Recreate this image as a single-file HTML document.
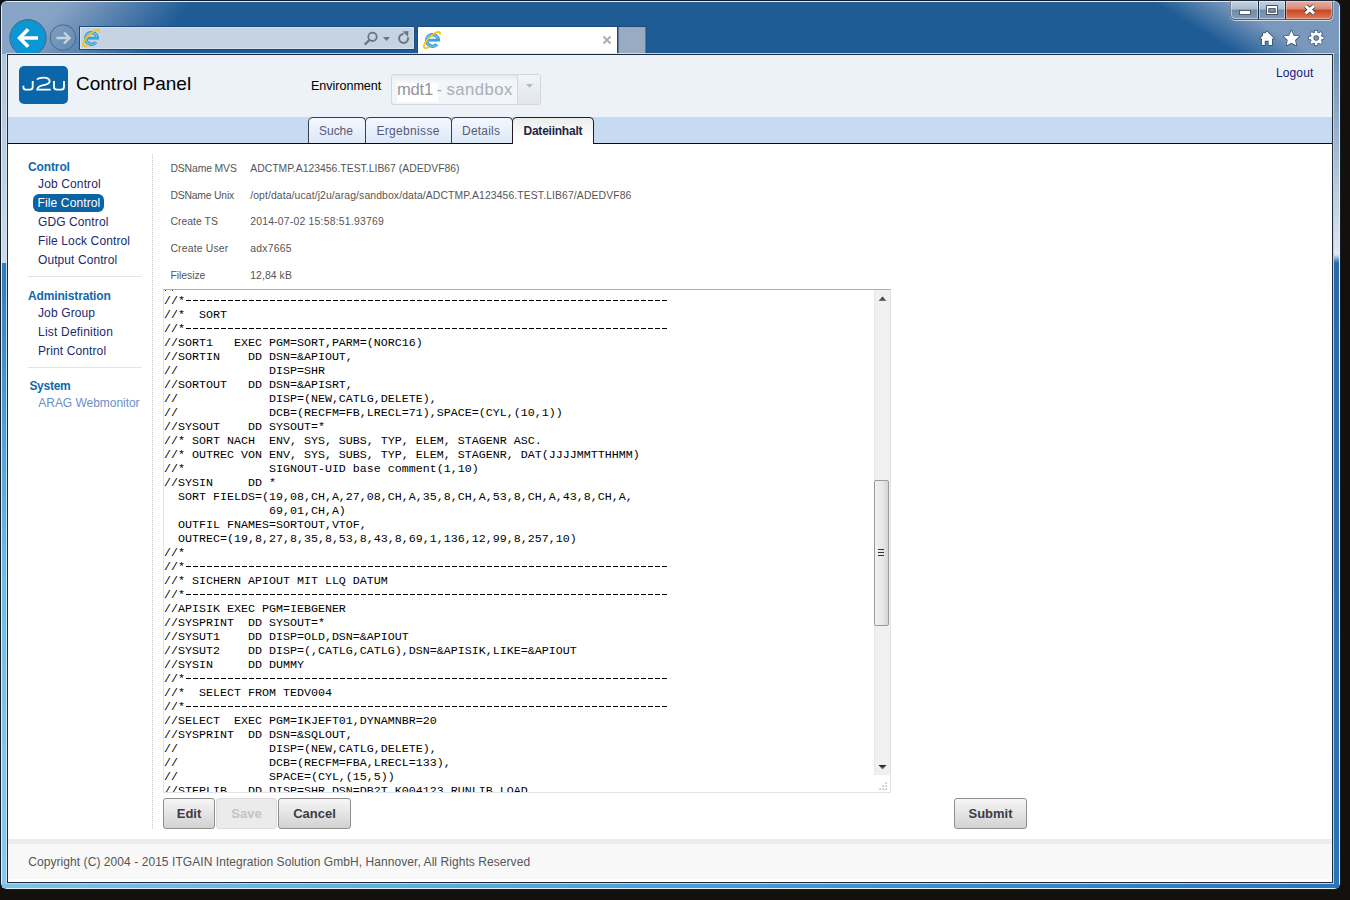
<!DOCTYPE html>
<html><head><meta charset="utf-8">
<style>
html,body{margin:0;padding:0}
body{width:1350px;height:900px;background:#12110e;position:relative;overflow:hidden;font-family:"Liberation Sans",sans-serif}
.abs{position:absolute}
#chrome{position:absolute;left:0;top:0}
#content{position:absolute;left:7px;top:54px;width:1326px;height:829px;box-sizing:border-box;border:1px solid #1c2a3a;background:#fff;overflow:hidden}
#content .abs{white-space:pre}
</style></head><body>
<svg id="chrome" width="1350" height="900" viewBox="0 0 1350 900">
  <defs>
    <linearGradient id="tl" gradientUnits="userSpaceOnUse" x1="60" y1="-10" x2="140" y2="62">
      <stop offset="0" stop-color="#88a4c6"/><stop offset="0.15" stop-color="#84a0c3"/><stop offset="0.52" stop-color="#5882af"/><stop offset="1" stop-color="#1f5c96"/>
    </linearGradient>
    <linearGradient id="tr" gradientUnits="userSpaceOnUse" x1="1150" y1="0" x2="1170" y2="-33">
      <stop offset="0" stop-color="#7a98bc" stop-opacity="0"/><stop offset="1" stop-color="#7a98bc"/>
    </linearGradient>
    <linearGradient id="lb" gradientUnits="userSpaceOnUse" x1="0" y1="54" x2="0" y2="889">
      <stop offset="0" stop-color="#b0c4da"/><stop offset="0.25" stop-color="#c8dbec"/>
      <stop offset="0.25" stop-color="#2d7cc0"/><stop offset="0.45" stop-color="#4aa2d8"/>
      <stop offset="0.62" stop-color="#6cbce4"/><stop offset="0.85" stop-color="#82c6ea"/><stop offset="1" stop-color="#86c8ea"/>
    </linearGradient>
    <linearGradient id="rb" gradientUnits="userSpaceOnUse" x1="0" y1="54" x2="0" y2="889">
      <stop offset="0" stop-color="#6f8fb2"/><stop offset="0.24" stop-color="#dfe8f0"/>
      <stop offset="0.25" stop-color="#2a6aaa"/><stop offset="1" stop-color="#2a74b8"/>
    </linearGradient>
    <linearGradient id="bb" gradientUnits="userSpaceOnUse" x1="0" y1="0" x2="1340" y2="0">
      <stop offset="0" stop-color="#7cc4e8"/><stop offset="0.5" stop-color="#4aa0d8"/><stop offset="1" stop-color="#2a74b8"/>
    </linearGradient>
    <linearGradient id="wbtn" x1="0" y1="0" x2="0" y2="1">
      <stop offset="0" stop-color="#c4d2e0"/><stop offset="0.45" stop-color="#a9bccf"/><stop offset="0.5" stop-color="#6d8cab"/><stop offset="1" stop-color="#7f9cba"/>
    </linearGradient>
    <linearGradient id="cbtn" x1="0" y1="0" x2="0" y2="1">
      <stop offset="0" stop-color="#e8b0a4"/><stop offset="0.45" stop-color="#d88a78"/><stop offset="0.5" stop-color="#c6451f"/><stop offset="1" stop-color="#dc7c5c"/>
    </linearGradient>
  </defs>
  <rect x="0" y="0" width="1341" height="890" rx="7" fill="#141d26"/>
  <rect x="1" y="1" width="1339" height="888" rx="6" fill="#e4ecf4"/>
  <rect x="2" y="2" width="1337" height="886" rx="5" fill="#1f5c96"/>
  <rect x="2" y="54" width="5" height="833" fill="url(#lb)"/>
  <rect x="1334" y="54" width="5" height="834" fill="url(#rb)"/>
  <rect x="2" y="884" width="1337" height="4" fill="url(#bb)"/>
  <path d="M2 7 Q2 2 7 2 L700 2 L700 54 L2 54 Z" fill="url(#tl)"/>
  <path d="M700 2 L1334 2 Q1339 2 1339 7 L1339 54 L700 54 Z" fill="url(#tr)"/>

  <path d="M1230.5 0.5 V15.5 Q1230.5 20.5 1235.5 20.5 H1328 Q1333 20.5 1333 15.5 V0.5" fill="none" stroke="#e6edf4" stroke-opacity="0.8" stroke-width="1"/>
  <path d="M1230.5 0 V15 Q1230.5 19.5 1235 19.5 H1328 Q1332.5 19.5 1332.5 15 V0 Z" fill="#1e2a38"/>
  <path d="M1231 1 H1258 V19 H1235 Q1231 19 1231 15 Z" fill="url(#wbtn)"/>
  <rect x="1259" y="1" width="26" height="18" fill="url(#wbtn)"/>
  <path d="M1286 1 H1332 V15 Q1332 19 1328 19 H1286 Z" fill="url(#cbtn)"/>
  <path d="M1231.5 1.5 H1257.5 V18.5 H1235 Q1231.5 18.5 1231.5 15 Z" fill="none" stroke="#ffffff" stroke-opacity="0.45" stroke-width="1"/>
  <rect x="1259.5" y="1.5" width="25" height="17" fill="none" stroke="#ffffff" stroke-opacity="0.45" stroke-width="1"/>
  <path d="M1286.5 1.5 H1331.5 V15 Q1331.5 18.5 1328 18.5 H1286.5 Z" fill="none" stroke="#ffffff" stroke-opacity="0.35" stroke-width="1"/>
  <rect x="1239.5" y="10.5" width="11" height="4" fill="#fff" stroke="#3a4450" stroke-width="0.8"/>
  <path fill-rule="evenodd" fill="#fff" stroke="#3a4450" stroke-width="0.9" d="M1266.5 5.5 H1277.5 V14.5 H1266.5 Z M1268.7 8.6 V12.3 H1275.3 V8.6 Z"/>
  <path d="M1305.6 6 L1313.9 13.4 M1313.9 6 L1305.6 13.4" stroke="#3a4450" stroke-width="4.6"/>
  <path d="M1305.6 6 L1313.9 13.4 M1313.9 6 L1305.6 13.4" stroke="#fff" stroke-width="3.0"/>

  <circle cx="28" cy="37.8" r="18.2" fill="#0a97d4" stroke="#46607a" stroke-width="0.9"/>
  <path d="M19.5 38 H38 M28.2 29.2 L19.6 38 L28.2 46.8" fill="none" stroke="#fff" stroke-width="3.6" stroke-linejoin="miter" stroke-linecap="butt"/>
  <circle cx="63" cy="37.6" r="12.8" fill="rgba(120,150,185,0.25)" stroke="#46698e" stroke-width="1"/>
  <path d="M56.5 38 H69.5 M64 32.5 L69.5 38 L64 43.5" fill="none" stroke="#c7d2de" stroke-width="2.4"/>

  <rect x="79.5" y="26.5" width="335" height="23" fill="#c5d3e2" stroke="#1b4a7a" stroke-width="1"/>
  <rect x="80.5" y="27.5" width="333" height="21" fill="none" stroke="#dae3ed" stroke-width="1"/>
  <circle cx="372.5" cy="36.8" r="4.2" fill="none" stroke="#6b757f" stroke-width="1.8"/>
  <path d="M369.6 39.8 L364.8 44.6" stroke="#6b757f" stroke-width="2.2"/>
  <path d="M383 37 H390 L386.5 41 Z" fill="#6b757f"/>
  <path d="M403.6 34.0 A4.5 4.5 0 1 0 407.9 37.2" fill="none" stroke="#6b757f" stroke-width="1.9"/>
  <path d="M402.6 31.6 L408.4 31.0 L408.0 36.8 Z" fill="#6b757f"/>

<g transform="translate(83,30)">
  <path d="M14.4 8.2 A5.9 5.9 0 1 0 13.0 12.3" fill="none" stroke="#2f96d6" stroke-width="3.3"/>
  <path d="M14.4 8.2 A5.9 5.9 0 1 0 13.0 12.3" fill="none" stroke="#70ccf2" stroke-width="1.3"/>
  <path d="M3.4 8.2 H15.9" stroke="#3aa2de" stroke-width="2.8"/>
  <path d="M16.03 1.87 L16.04 1.34 L15.95 0.89 L15.77 0.52 L15.49 0.24 L15.13 0.05 L14.68 -0.04 L14.15 -0.04 L13.55 0.06 L12.88 0.25 L12.15 0.54 L11.38 0.91 L10.56 1.37 L9.72 1.91 L8.85 2.52 L7.97 3.19 L7.10 3.92 L6.23 4.70 L5.39 5.52 L4.57 6.37 L3.80 7.24 L3.08 8.11 L2.41 8.99 L1.82 9.85 L1.29 10.70 L0.85 11.51 L0.49 12.27 L0.22 12.99 L0.04 13.65 L-0.04 14.24 L-0.03 14.76 L0.08 15.19 L0.28 15.54 L0.57 15.80 L0.96 15.97 L1.42 16.05 L1.97 16.02 L2.58 15.91 L3.26 15.70 L4.00 15.39 L4.78 15.00" fill="none" stroke="#f2b600" stroke-width="1.7" stroke-linecap="round"/>
  <path d="M16.03 1.87 L16.04 1.34 L15.95 0.89 L15.77 0.52 L15.49 0.24 L15.13 0.05 L14.68 -0.04 L14.15 -0.04 L13.55 0.06 L12.88 0.25 L12.15 0.54 L11.38 0.91 L10.56 1.37 L9.72 1.91 L8.85 2.52 L7.97 3.19 L7.10 3.92 L6.23 4.70 L5.39 5.52 L4.57 6.37 L3.80 7.24 L3.08 8.11 L2.41 8.99 L1.82 9.85 L1.29 10.70 L0.85 11.51 L0.49 12.27 L0.22 12.99 L0.04 13.65 L-0.04 14.24 L-0.03 14.76 L0.08 15.19 L0.28 15.54 L0.57 15.80 L0.96 15.97 L1.42 16.05 L1.97 16.02 L2.58 15.91 L3.26 15.70 L4.00 15.39 L4.78 15.00" fill="none" stroke="#ffe23a" stroke-width="0.6" stroke-linecap="round"/>
</g>
  <rect x="417.5" y="26.5" width="200" height="28" fill="#fff" stroke="#1b4a7a" stroke-width="1"/>
  <rect x="618" y="26.5" width="28" height="28" fill="#98abc0" stroke="#1b4a7a" stroke-width="1"/>
  <path d="M603.5 36.5 L610.5 43.5 M610.5 36.5 L603.5 43.5" stroke="#ababab" stroke-width="1.8"/>

<g transform="translate(424,32)">
  <path d="M14.4 8.2 A5.9 5.9 0 1 0 13.0 12.3" fill="none" stroke="#2f96d6" stroke-width="3.3"/>
  <path d="M14.4 8.2 A5.9 5.9 0 1 0 13.0 12.3" fill="none" stroke="#70ccf2" stroke-width="1.3"/>
  <path d="M3.4 8.2 H15.9" stroke="#3aa2de" stroke-width="2.8"/>
  <path d="M16.03 1.87 L16.04 1.34 L15.95 0.89 L15.77 0.52 L15.49 0.24 L15.13 0.05 L14.68 -0.04 L14.15 -0.04 L13.55 0.06 L12.88 0.25 L12.15 0.54 L11.38 0.91 L10.56 1.37 L9.72 1.91 L8.85 2.52 L7.97 3.19 L7.10 3.92 L6.23 4.70 L5.39 5.52 L4.57 6.37 L3.80 7.24 L3.08 8.11 L2.41 8.99 L1.82 9.85 L1.29 10.70 L0.85 11.51 L0.49 12.27 L0.22 12.99 L0.04 13.65 L-0.04 14.24 L-0.03 14.76 L0.08 15.19 L0.28 15.54 L0.57 15.80 L0.96 15.97 L1.42 16.05 L1.97 16.02 L2.58 15.91 L3.26 15.70 L4.00 15.39 L4.78 15.00" fill="none" stroke="#f2b600" stroke-width="1.7" stroke-linecap="round"/>
  <path d="M16.03 1.87 L16.04 1.34 L15.95 0.89 L15.77 0.52 L15.49 0.24 L15.13 0.05 L14.68 -0.04 L14.15 -0.04 L13.55 0.06 L12.88 0.25 L12.15 0.54 L11.38 0.91 L10.56 1.37 L9.72 1.91 L8.85 2.52 L7.97 3.19 L7.10 3.92 L6.23 4.70 L5.39 5.52 L4.57 6.37 L3.80 7.24 L3.08 8.11 L2.41 8.99 L1.82 9.85 L1.29 10.70 L0.85 11.51 L0.49 12.27 L0.22 12.99 L0.04 13.65 L-0.04 14.24 L-0.03 14.76 L0.08 15.19 L0.28 15.54 L0.57 15.80 L0.96 15.97 L1.42 16.05 L1.97 16.02 L2.58 15.91 L3.26 15.70 L4.00 15.39 L4.78 15.00" fill="none" stroke="#ffe23a" stroke-width="0.6" stroke-linecap="round"/>
</g>
  <g stroke="#2e4a66" stroke-width="1.4" stroke-linejoin="round" fill="#fff" paint-order="stroke">
  <path d="M1267 31.5 L1274 38.6 H1272 V45 H1268.6 V40.8 H1264.8 V45 H1262 V38.6 H1260 L1263 35.5 V33.2 H1265 V33.5 Z"/>
  <path d="M1291.40 30.60 L1293.69 35.74 L1299.29 36.34 L1295.11 40.11 L1296.28 45.61 L1291.40 42.80 L1286.52 45.61 L1287.69 40.11 L1283.51 36.34 L1289.11 35.74 Z"/>
  </g>
  <g transform="translate(1316.2,38)" fill="#fff" stroke="#2e4a66" stroke-width="1.2" paint-order="stroke">
  <path fill-rule="evenodd" d="M7.30 -1.21 L7.30 1.21 L5.24 1.30 L4.63 2.79 L6.02 4.30 L4.30 6.02 L2.79 4.63 L1.30 5.24 L1.21 7.30 L-1.21 7.30 L-1.30 5.24 L-2.79 4.63 L-4.30 6.02 L-6.02 4.30 L-4.63 2.79 L-5.24 1.30 L-7.30 1.21 L-7.30 -1.21 L-5.24 -1.30 L-4.63 -2.79 L-6.02 -4.30 L-4.30 -6.02 L-2.79 -4.63 L-1.30 -5.24 L-1.21 -7.30 L1.21 -7.30 L1.30 -5.24 L2.79 -4.63 L4.30 -6.02 L6.02 -4.30 L4.63 -2.79 L5.24 -1.30 Z M2.7 0 A2.7 2.7 0 1 0 -2.7 0 A2.7 2.7 0 1 0 2.7 0 Z"/>
  </g>

  <rect x="6.5" y="53.5" width="1327" height="830" fill="none" stroke="#dce6f0" stroke-opacity="0.85" stroke-width="1"/>

</svg>
<div id="content">
<div class="abs" style="left:0px;top:0px;width:1324px;height:62px;background:#edf1f8"></div>
<div class="abs" style="left:0px;top:62px;width:1324px;height:26px;background:#c6dbf2"></div>
<div class="abs" style="left:0px;top:88px;width:1324px;height:1px;background:#0a0a0a"></div>
<div class="abs" style="left:11px;top:11px;width:49px;height:38px;border-radius:5px;background:#0b66a9"></div>
<svg class="abs" style="left:11px;top:11px" width="49" height="38" viewBox="0 0 49 38">
<g fill="none" stroke="#fff" stroke-width="1.8">
<path d="M13.7 15 V21 Q13.7 23.6 11 23.6 H6.6 Q4.4 23.6 4.4 21.6 V19.8"/>
<path d="M17.8 13.4 Q20 11.6 24.5 11.6 Q30.6 11.6 30.6 15.3 Q30.6 18.3 24.6 19.1 Q18.4 20.1 18.3 23.6 H31.7"/>
<path d="M35 15 V21 Q35 23.6 37.8 23.6 H42.2 Q45 23.6 45 21 V15"/>
</g></svg>
<div class="abs" id="t0" style="left:68px;top:19.12px;font-size:19px;line-height:20px;color:#000;letter-spacing:0.000px;">Control Panel</div>
<div class="abs" id="t1" style="left:303px;top:20.63px;font-size:12.6px;line-height:20px;color:#000;letter-spacing:-0.045px;">Environment</div>
<div class="abs" style="left:383px;top:19px;width:150px;height:31px;box-sizing:border-box;border:1px solid #d3d6dc;border-radius:3px;background:linear-gradient(#e6e9ee,#f2f5f9 6px,#f2f5f9)"></div>
<div class="abs" style="left:509px;top:20px;width:1px;height:29px;background:#d6d9de"></div>
<div class="abs" style="left:510px;top:20px;width:22px;height:29px;background:linear-gradient(#f2f4f7,#e2e5ea);border-radius:0 2px 2px 0"></div>
<svg class="abs" style="left:509px;top:26px" width="24" height="10"><path d="M9 3 H16 L12.5 6.8 Z" fill="#a9bccc"/></svg>
<div class="abs" style="left:389px;top:28px;width:41px;height:19px;background:#fff"></div>
<div class="abs" id="t2" style="left:389px;top:25.25px;font-size:16.6px;line-height:20px;color:#959595;letter-spacing:-0.240px;">mdt1</div>
<div class="abs" style="left:428.6px;top:25.25px;font-size:16.6px;line-height:20px;color:#a9aeb6;">-</div>
<div class="abs" id="t3" style="left:438.4px;top:25.25px;font-size:16.6px;line-height:20px;color:#a9aeb6;letter-spacing:0.510px;">sandbox</div>
<div class="abs" id="t4" style="left:1268px;top:7.84px;font-size:12px;line-height:20px;color:#0f1c80;letter-spacing:0.108px;">Logout</div>
<div class="abs" style="left:300px;top:62px;width:58px;height:26px;box-sizing:border-box;border:1px solid #3a3f46;border-bottom:none;border-radius:5px 5px 0 0;background:linear-gradient(#f4f8fd,#dce8f7)"></div>
<div class="abs" style="left:357px;top:62px;width:87px;height:26px;box-sizing:border-box;border:1px solid #3a3f46;border-bottom:none;border-radius:5px 5px 0 0;background:linear-gradient(#f4f8fd,#dce8f7)"></div>
<div class="abs" style="left:443px;top:62px;width:62px;height:26px;box-sizing:border-box;border:1px solid #3a3f46;border-bottom:none;border-radius:5px 5px 0 0;background:linear-gradient(#f4f8fd,#dce8f7)"></div>
<div class="abs" style="left:504px;top:62px;width:82px;height:27px;box-sizing:border-box;border:1px solid #1e1e1e;border-bottom:none;border-radius:5px 5px 0 0;background:linear-gradient(#ececec,#fff 80%)"></div>
<div class="abs" id="t5" style="left:311px;top:65.84px;font-size:12px;line-height:20px;color:#565a78;letter-spacing:-0.022px;">Suche</div>
<div class="abs" id="t6" style="left:368.4px;top:65.84px;font-size:12px;line-height:20px;color:#565a78;letter-spacing:0.330px;">Ergebnisse</div>
<div class="abs" id="t7" style="left:454px;top:65.84px;font-size:12px;line-height:20px;color:#565a78;letter-spacing:0.210px;">Details</div>
<div class="abs" id="t8" style="left:515.5px;top:65.84px;font-size:12px;line-height:20px;color:#1c2448;font-weight:700;letter-spacing:-0.234px;">Dateiinhalt</div>
<div class="abs" id="t9" style="left:20px;top:101.84px;font-size:12px;line-height:20px;color:#1168ac;font-weight:700;letter-spacing:-0.120px;">Control</div>
<div class="abs" id="t10" style="left:30px;top:118.84px;font-size:12px;line-height:20px;color:#1a2a6e;letter-spacing:0.135px;">Job Control</div>
<div class="abs" style="left:25px;top:139px;width:71px;height:18px;border-radius:6px;background:#0b63a4"></div>
<div class="abs" style="left:29.6px;top:137.84px;font-size:12px;line-height:20px;color:#fff;letter-spacing:0.120px;">File Control</div>
<div class="abs" id="t11" style="left:30px;top:156.84px;font-size:12px;line-height:20px;color:#1a2a6e;letter-spacing:0.099px;">GDG Control</div>
<div class="abs" id="t12" style="left:30px;top:175.84px;font-size:12px;line-height:20px;color:#1a2a6e;letter-spacing:0.124px;">File Lock Control</div>
<div class="abs" id="t13" style="left:30px;top:194.84px;font-size:12px;line-height:20px;color:#1a2a6e;letter-spacing:0.083px;">Output Control</div>
<div class="abs" style="left:20px;top:221px;width:114px;height:1px;background:#e4e4e4"></div>
<div class="abs" id="t14" style="left:20px;top:230.84px;font-size:12px;line-height:20px;color:#1168ac;font-weight:700;letter-spacing:-0.145px;">Administration</div>
<div class="abs" id="t15" style="left:30px;top:247.84px;font-size:12px;line-height:20px;color:#1a2a6e;letter-spacing:0.124px;">Job Group</div>
<div class="abs" id="t16" style="left:30px;top:266.84px;font-size:12px;line-height:20px;color:#1a2a6e;letter-spacing:0.206px;">List Definition</div>
<div class="abs" id="t17" style="left:30px;top:285.84px;font-size:12px;line-height:20px;color:#1a2a6e;letter-spacing:0.113px;">Print Control</div>
<div class="abs" style="left:20px;top:312px;width:114px;height:1px;background:#e4e4e4"></div>
<div class="abs" id="t18" style="left:21.4px;top:320.84px;font-size:12px;line-height:20px;color:#1168ac;font-weight:700;letter-spacing:-0.270px;">System</div>
<div class="abs" id="t19" style="left:30.299999999999997px;top:337.84px;font-size:12px;line-height:20px;color:#6b8fcc;letter-spacing:-0.039px;">ARAG Webmonitor</div>
<div class="abs" style="left:144px;top:99px;width:1px;height:675px;background:repeating-linear-gradient(#c8c8c8 0 1px,transparent 1px 2px)"></div>
<div class="abs" id="t20" style="left:162.4px;top:104.40px;font-size:10.4px;line-height:20px;color:#555;letter-spacing:-0.120px;">DSName MVS</div>
<div class="abs" id="t21" style="left:242.2px;top:104.40px;font-size:10.4px;line-height:20px;color:#555;letter-spacing:0.015px;">ADCTMP.A123456.TEST.LIB67 (ADEDVF86)</div>
<div class="abs" id="t22" style="left:162.4px;top:131.40px;font-size:10.4px;line-height:20px;color:#555;letter-spacing:-0.198px;">DSName Unix</div>
<div class="abs" id="t23" style="left:242.2px;top:131.40px;font-size:10.4px;line-height:20px;color:#555;letter-spacing:0.109px;">/opt/data/ucat/j2u/arag/sandbox/data/ADCTMP.A123456.TEST.LIB67/ADEDVF86</div>
<div class="abs" id="t24" style="left:162.4px;top:157.00px;font-size:10.4px;line-height:20px;color:#555;letter-spacing:0.045px;">Create TS</div>
<div class="abs" id="t25" style="left:242.2px;top:157.00px;font-size:10.4px;line-height:20px;color:#555;letter-spacing:0.218px;">2014-07-02 15:58:51.93769</div>
<div class="abs" id="t26" style="left:162.4px;top:183.80px;font-size:10.4px;line-height:20px;color:#555;letter-spacing:0.180px;">Create User</div>
<div class="abs" id="t27" style="left:242.2px;top:183.80px;font-size:10.4px;line-height:20px;color:#555;letter-spacing:0.255px;">adx7665</div>
<div class="abs" id="t28" style="left:162.4px;top:211.00px;font-size:10.4px;line-height:20px;color:#555;letter-spacing:-0.039px;">Filesize</div>
<div class="abs" id="t29" style="left:242.2px;top:211.00px;font-size:10.4px;line-height:20px;color:#555;letter-spacing:0.090px;">12,84 kB</div>
<div class="abs" style="left:155px;top:234px;width:728px;height:504px;box-sizing:border-box;border:1px solid #dfe3ea;border-top-color:#abadb3;background:#fff;overflow:hidden">
<div style="position:absolute;left:1px;top:0;width:1px;height:1px;background:#2a2050"></div><div style="position:absolute;left:8px;top:0;width:1px;height:1px;background:#2a2050"></div>
<div style="position:absolute;left:21px;top:10px;width:483px;height:1px;background:linear-gradient(90deg,transparent 0 1px,#000 1px 6px,transparent 6px 7px) 0 0/7px 1px repeat-x"></div>
<div style="position:absolute;left:21px;top:38px;width:483px;height:1px;background:linear-gradient(90deg,transparent 0 1px,#000 1px 6px,transparent 6px 7px) 0 0/7px 1px repeat-x"></div>
<div style="position:absolute;left:21px;top:276px;width:483px;height:1px;background:linear-gradient(90deg,transparent 0 1px,#000 1px 6px,transparent 6px 7px) 0 0/7px 1px repeat-x"></div>
<div style="position:absolute;left:21px;top:304px;width:483px;height:1px;background:linear-gradient(90deg,transparent 0 1px,#000 1px 6px,transparent 6px 7px) 0 0/7px 1px repeat-x"></div>
<div style="position:absolute;left:21px;top:388px;width:483px;height:1px;background:linear-gradient(90deg,transparent 0 1px,#000 1px 6px,transparent 6px 7px) 0 0/7px 1px repeat-x"></div>
<div style="position:absolute;left:21px;top:416px;width:483px;height:1px;background:linear-gradient(90deg,transparent 0 1px,#000 1px 6px,transparent 6px 7px) 0 0/7px 1px repeat-x"></div>
<pre style="position:absolute;left:0px;top:-10.10px;margin:0;font-family:'Liberation Mono',monospace;font-size:11.667px;line-height:14px;color:#000">//*  JOB PLACEHOLDER
//*
//*  SORT
//*
//SORT1   EXEC PGM=SORT,PARM=(NORC16)
//SORTIN    DD DSN=&amp;APIOUT,
//             DISP=SHR
//SORTOUT   DD DSN=&amp;APISRT,
//             DISP=(NEW,CATLG,DELETE),
//             DCB=(RECFM=FB,LRECL=71),SPACE=(CYL,(10,1))
//SYSOUT    DD SYSOUT=*
//* SORT NACH  ENV, SYS, SUBS, TYP, ELEM, STAGENR ASC.
//* OUTREC VON ENV, SYS, SUBS, TYP, ELEM, STAGENR, DAT(JJJJMMTTHHMM)
//*            SIGNOUT-UID base comment(1,10)
//SYSIN     DD *
  SORT FIELDS=(19,08,CH,A,27,08,CH,A,35,8,CH,A,53,8,CH,A,43,8,CH,A,
               69,01,CH,A)
  OUTFIL FNAMES=SORTOUT,VTOF,
  OUTREC=(19,8,27,8,35,8,53,8,43,8,69,1,136,12,99,8,257,10)
//*
//*
//* SICHERN APIOUT MIT LLQ DATUM
//*
//APISIK EXEC PGM=IEBGENER
//SYSPRINT  DD SYSOUT=*
//SYSUT1    DD DISP=OLD,DSN=&amp;APIOUT
//SYSUT2    DD DISP=(,CATLG,CATLG),DSN=&amp;APISIK,LIKE=&amp;APIOUT
//SYSIN     DD DUMMY
//*
//*  SELECT FROM TEDV004
//*
//SELECT  EXEC PGM=IKJEFT01,DYNAMNBR=20
//SYSPRINT  DD DSN=&amp;SQLOUT,
//             DISP=(NEW,CATLG,DELETE),
//             DCB=(RECFM=FBA,LRECL=133),
//             SPACE=(CYL,(15,5))
//STEPLIB   DD DISP=SHR,DSN=DB2T.K004123.RUNLIB.LOAD
//SYSTSPRT  DD SYSOUT=*</pre>
<div style="position:absolute;left:710px;top:0;width:17px;height:485px;background:#f0f0f0;border-left:1px solid #e8e8e8;box-sizing:border-box"></div>
<svg style="position:absolute;left:710px;top:0" width="17" height="485"><defs><linearGradient id="sa" x1="0" y1="0" x2="0" y2="1"><stop offset="0" stop-color="#1a1a1a"/><stop offset="1" stop-color="#777"/></linearGradient><linearGradient id="sb" x1="0" y1="0" x2="0" y2="1"><stop offset="0" stop-color="#1a1a1a"/><stop offset="1" stop-color="#888"/></linearGradient></defs><path d="M4.5 11 L8.5 6.6 L12.5 11 Z" fill="url(#sa)"/><path d="M4.5 475 L12.5 475 L8.5 479.5 Z" fill="url(#sb)"/></svg>
<svg style="position:absolute;left:712px;top:490px" width="12" height="12"><g fill="#8a8a8a"><rect x="9.5" y="2.5" width="1.2" height="1.2"/><rect x="6.5" y="5.5" width="1.2" height="1.2"/><rect x="9.5" y="5.5" width="1.2" height="1.2"/><rect x="3.5" y="8.5" width="1.2" height="1.2"/><rect x="6.5" y="8.5" width="1.2" height="1.2"/><rect x="9.5" y="8.5" width="1.2" height="1.2"/></g></svg>
<div style="position:absolute;left:710px;top:190px;width:15px;height:146px;box-sizing:border-box;border:1px solid #9a9a9a;border-radius:2px;background:linear-gradient(90deg,#f2f2f2,#e6e6e6 60%,#d4d4d4)"></div>
<svg style="position:absolute;left:710px;top:258px" width="15" height="10"><path d="M4 1.5 H10 M4 4.5 H10 M4 7.5 H10" stroke="#333" stroke-width="1"/></svg>
</div>
<div class="abs" style="left:155px;top:743px;width:52px;height:31px;box-sizing:border-box;border:1px solid #8e8e8e;border-radius:3px;background:linear-gradient(#f6f6f6,#d2d2d2)"></div>
<div class="abs" style="left:155px;top:743px;width:52px;height:31px;line-height:31px;text-align:center;font-size:13px;font-weight:700;color:#3c3c46">Edit</div>
<div class="abs" style="left:208px;top:743px;width:61px;height:31px;box-sizing:border-box;border:1px solid #dcdcdc;border-radius:3px;background:#ebebeb"></div>
<div class="abs" style="left:208px;top:743px;width:61px;height:31px;line-height:31px;text-align:center;font-size:13px;font-weight:700;color:#c4c4c4">Save</div>
<div class="abs" style="left:270px;top:743px;width:73px;height:31px;box-sizing:border-box;border:1px solid #8e8e8e;border-radius:3px;background:linear-gradient(#f6f6f6,#d2d2d2)"></div>
<div class="abs" style="left:270px;top:743px;width:73px;height:31px;line-height:31px;text-align:center;font-size:13px;font-weight:700;color:#3c3c46">Cancel</div>
<div class="abs" style="left:946px;top:743px;width:73px;height:31px;box-sizing:border-box;border:1px solid #8e8e8e;border-radius:3px;background:linear-gradient(#f6f6f6,#d2d2d2)"></div>
<div class="abs" style="left:946px;top:743px;width:73px;height:31px;line-height:31px;text-align:center;font-size:13px;font-weight:700;color:#3c3c46">Submit</div>
<div class="abs" style="left:0px;top:784px;width:1324px;height:5px;background:#ececec"></div>
<div class="abs" style="left:0px;top:789px;width:1324px;height:35px;background:#f8f8f8"></div>
<div class="abs" id="t30" style="left:20.3px;top:796.84px;font-size:12px;line-height:20px;color:#555;letter-spacing:0.063px;">Copyright (C) 2004 - 2015 ITGAIN Integration Solution GmbH, Hannover, All Rights Reserved</div>
</div>
</body></html>
